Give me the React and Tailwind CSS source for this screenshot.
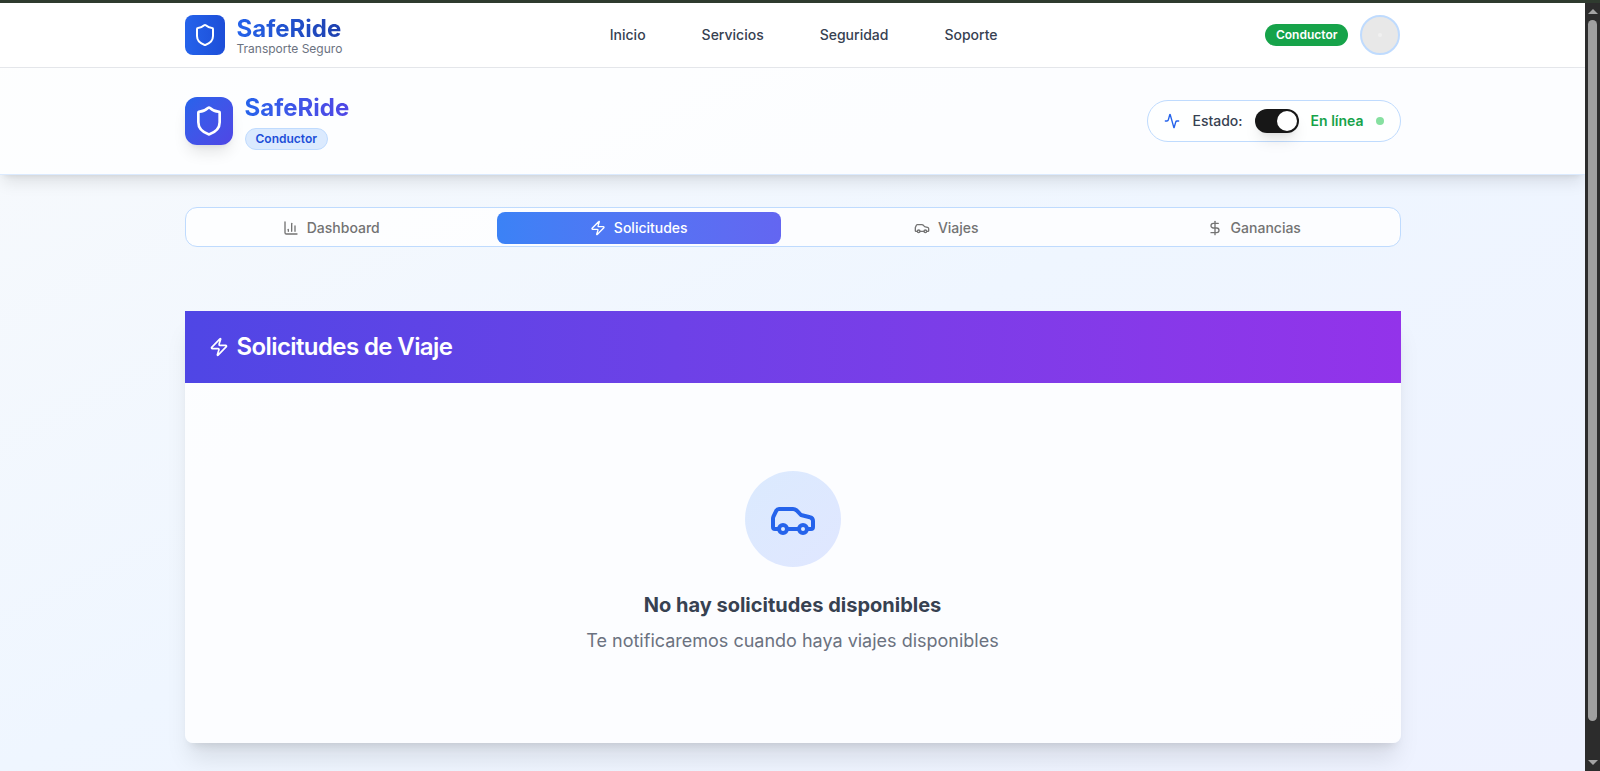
import { Activity, Car, ChartColumn, DollarSign, Shield, Zap } from 'lucide-react'

const tabs = [
  { name: 'Dashboard', icon: ChartColumn },
  { name: 'Solicitudes', icon: Zap, active: true },
  { name: 'Viajes', icon: Car },
  { name: 'Ganancias', icon: DollarSign },
]

const links = ['Inicio', 'Servicios', 'Seguridad', 'Soporte']

function Scrollbar() {
  return (
    <div className="w-[15px] shrink-0 flex flex-col items-center bg-[#2c2c2c]">
      <div className="h-[17px] flex items-center justify-center">
        <div className="w-0 h-0 border-x-[5px] border-x-transparent border-b-[5px] border-b-[#a3a3a3]" />
      </div>
      <div className="w-[9px] flex-1 rounded-full bg-[#9f9f9f]" />
      <div className="h-[17px] mt-[33px] flex items-center justify-center">
        <div className="w-0 h-0 border-x-[5px] border-x-transparent border-t-[5px] border-t-[#a3a3a3]" />
      </div>
    </div>
  )
}

export default function App() {
  return (
    <div className="h-screen flex flex-col overflow-hidden font-['Inter',sans-serif]">
      <div className="h-[3px] shrink-0 bg-[#2f3b2f]" />
      <div className="flex-1 min-h-0 flex">
        <div className="flex-1 min-w-0 bg-gradient-to-br from-[#f8fafc] via-[#eff6ff] to-[#eef2ff]">
          <nav className="h-[65px] bg-white border-b border-[#e5e7eb]">
            <div className="mx-auto max-w-7xl h-full px-8 flex items-center justify-between">
              <div className="flex items-center gap-3">
                <div className="w-10 h-10 rounded-lg bg-gradient-to-r from-[#2563eb] to-[#1d4ed8] flex items-center justify-center">
                  <Shield className="w-6 h-6 text-white" />
                </div>
                <div className="pt-[2px]">
                  <div className="text-2xl leading-[26px] font-bold bg-gradient-to-r from-[#2563eb] to-[#1e40af] bg-clip-text text-transparent">
                    SafeRide
                  </div>
                  <div className="text-xs leading-[14px] text-[#6b7280]">Transporte Seguro</div>
                </div>
              </div>
              <div className="flex items-center gap-14">
                {links.map((link) => (
                  <a key={link} className="text-sm font-medium text-[#374151]">
                    {link}
                  </a>
                ))}
              </div>
              <div className="flex items-center gap-3">
                <span className="rounded-full bg-[#16a34a] px-[11px] py-[3px] text-xs font-semibold text-white">
                  Conductor
                </span>
                <div className="w-10 h-10 rounded-full border-2 border-[#bfdbfe] bg-[#e8e8e8] flex items-center justify-center">
                  <div className="w-1 h-1 rounded-full bg-[#f0f0f0]" />
                </div>
              </div>
            </div>
          </nav>

          <header className="h-[107px] bg-white/80 shadow-lg border-b border-[#dbeafe]">
            <div className="mx-auto max-w-7xl h-full px-8 pb-[1px] flex items-center justify-between">
              <div className="flex items-center gap-3">
                <div className="w-12 h-12 rounded-xl bg-gradient-to-br from-[#2563eb] to-[#4f46e5] shadow-lg flex items-center justify-center">
                  <Shield className="w-8 h-8 text-white" />
                </div>
                <div>
                  <div className="text-2xl leading-8 font-bold bg-gradient-to-r from-[#2563eb] to-[#4f46e5] bg-clip-text text-transparent">
                    SafeRide
                  </div>
                  <span className="mt-1 flex w-fit rounded-full border border-[#bfdbfe] bg-[#dbeafe] px-[10px] py-[2px] text-xs font-semibold text-[#1d4ed8]">
                    Conductor
                  </span>
                </div>
              </div>
              <div className="h-[42px] flex items-center gap-3 rounded-full border border-[#bfdbfe] bg-white/80 px-4">
                <Activity className="w-4 h-4 text-[#2563eb]" />
                <span className="text-sm font-medium text-[#374151]">Estado:</span>
                <div className="w-11 h-6 rounded-full bg-[#171717] shadow-lg flex items-center justify-end pr-[2px]">
                  <div className="w-5 h-5 rounded-full bg-white" />
                </div>
                <span className="text-sm font-semibold text-[#16a34a]">En línea</span>
                <div className="w-2 h-2 rounded-full bg-[#86e0a0]" />
              </div>
            </div>
          </header>

          <main className="mx-auto max-w-7xl px-8 pt-8">
            <div className="h-10 grid grid-cols-4 gap-6 rounded-xl border border-[#bfdbfe] bg-white/80 px-1 pt-1 pb-[2px]">
              {tabs.map((tab) => {
                const Icon = tab.icon
                return (
                  <button
                    key={tab.name}
                    className={
                      tab.active
                        ? 'flex items-center justify-center gap-2 rounded-lg bg-gradient-to-r from-[#3b82f6] to-[#6366f1] text-sm font-medium text-white'
                        : 'flex items-center justify-center gap-2 rounded-lg text-sm font-medium text-[#737373]'
                    }
                  >
                    <Icon className="w-4 h-4" />
                    {tab.name}
                  </button>
                )
              })}
            </div>

            <section className="mt-16 rounded-b-lg bg-white/80 shadow-xl overflow-hidden">
              <div className="h-[72px] px-6 flex items-center gap-2 bg-gradient-to-r from-[#4f46e5] to-[#9333ea]">
                <Zap className="w-5 h-5 text-white" />
                <h2 className="text-2xl font-semibold tracking-tight text-white">Solicitudes de Viaje</h2>
              </div>
              <div className="h-[360px] pt-[88px] flex flex-col items-center">
                <div className="w-24 h-24 rounded-full bg-gradient-to-br from-[#dbeafe] to-[#e0e7ff] flex items-center justify-center">
                  <Car className="w-12 h-12 text-[#2563eb]" />
                </div>
                <h3 className="mt-6 text-xl font-bold text-[#374151]">No hay solicitudes disponibles</h3>
                <p className="mt-2 text-lg text-[#6b7280]">Te notificaremos cuando haya viajes disponibles</p>
              </div>
            </section>
          </main>
        </div>
        <Scrollbar />
      </div>
    </div>
  )
}
